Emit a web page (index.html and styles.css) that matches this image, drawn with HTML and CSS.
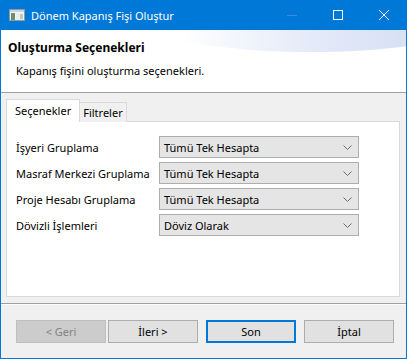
FILE: index.html
```html
<!DOCTYPE html>
<html lang="tr">
<head>
<meta charset="utf-8">
<link rel="stylesheet" href="styles.css">
</head>
<body>
<div class="window">
  <div class="titlebar">
    <svg class="app-icon" width="16" height="12" viewBox="0 0 16 12">
      <rect x="0.5" y="0.5" width="15" height="11" fill="#f4f4f4" stroke="#8a9aa8"/>
      <rect x="1" y="1" width="14" height="2" fill="#c8d4dc"/>
      <rect x="2" y="4" width="4" height="7" fill="#6f8f6a"/>
      <rect x="7" y="4" width="7" height="7" fill="#e8eef2"/>
      <rect x="11" y="5" width="3" height="5" fill="#b9cfa8"/>
    </svg>
    <span class="title">Dönem Kapanış Fişi Oluştur</span>
    <div class="controls">
      <span class="ctl min"><svg width="10" height="10" viewBox="0 0 10 10"><path d="M0 5.5h10" stroke="#3b8ddb" stroke-width="1"/></svg></span>
      <span class="ctl"><svg width="10" height="10" viewBox="0 0 10 10"><rect x="0.5" y="0.5" width="9" height="9" fill="none" stroke="#fff" stroke-width="1"/></svg></span>
      <span class="ctl"><svg width="10" height="10" viewBox="0 0 10 10"><path d="M0 0L10 10M10 0L0 10" stroke="#fff" stroke-width="1"/></svg></span>
    </div>
  </div>
  <div class="header">
    <div class="swoosh"></div>
    <div class="h-title">Oluşturma Seçenekleri</div>
    <div class="h-sub">Kapanış fişini oluşturma seçenekleri.</div>
  </div>
  <div class="body">
    <div class="tabs">
      <div class="tab active">Seçenekler</div>
      <div class="tab">Filtreler</div>
    </div>
    <div class="panel">
      <div class="row">
        <span class="label">İşyeri Gruplama</span>
        <div class="combo"><span>Tümü Tek Hesapta</span><svg class="chev" width="9" height="5" viewBox="0 0 9 5"><path d="M0.5 0.5L4.5 4.5L8.5 0.5" fill="none" stroke="#6d6d6d" stroke-width="1"/></svg></div>
      </div>
      <div class="row">
        <span class="label">Masraf Merkezi Gruplama</span>
        <div class="combo"><span>Tümü Tek Hesapta</span><svg class="chev" width="9" height="5" viewBox="0 0 9 5"><path d="M0.5 0.5L4.5 4.5L8.5 0.5" fill="none" stroke="#6d6d6d" stroke-width="1"/></svg></div>
      </div>
      <div class="row">
        <span class="label">Proje Hesabı Gruplama</span>
        <div class="combo"><span>Tümü Tek Hesapta</span><svg class="chev" width="9" height="5" viewBox="0 0 9 5"><path d="M0.5 0.5L4.5 4.5L8.5 0.5" fill="none" stroke="#6d6d6d" stroke-width="1"/></svg></div>
      </div>
      <div class="row">
        <span class="label">Dövizli İşlemleri</span>
        <div class="combo"><span>Döviz Olarak</span><svg class="chev" width="9" height="5" viewBox="0 0 9 5"><path d="M0.5 0.5L4.5 4.5L8.5 0.5" fill="none" stroke="#6d6d6d" stroke-width="1"/></svg></div>
      </div>
    </div>
  </div>
  <div class="footer">
    <div class="buttons">
      <button class="btn disabled">&lt; Geri</button>
      <button class="btn next">İleri &gt;</button>
      <button class="btn default">Son</button>
      <button class="btn">İptal</button>
    </div>
  </div>
</div>
</body>
</html>
```
FILE: styles.css
```css
* { box-sizing: border-box; }
html, body { margin: 0; padding: 0; }
body {
  width: 407px;
  height: 359px;
  font-family: "Noto Sans", "Open Sans", sans-serif;
  font-size: 11px;
  color: #000;
  background: #fff;
}
.window {
  width: 407px;
  height: 359px;
  border: 1px solid #0078d7;
  border-top: none;
  background: #f0f0f0;
  display: flex;
  flex-direction: column;
  overflow: hidden;
}
.titlebar {
  height: 30px;
  margin: 0 -1px;
  background: #0078d7;
  display: flex;
  align-items: center;
  color: #fff;
}
.app-icon { margin-left: 9px; margin-top: 0px; }
.title { margin-left: 6px; font-size: 11px; line-height: 1; }
.controls { margin-left: auto; display: flex; height: 100%; }
.ctl {
  width: 46px;
  height: 100%;
  display: flex;
  align-items: center;
  justify-content: center;
}
.ctl svg { display: block; }
.header {
  position: relative;
  height: 63px;
  background: #fff;
  border-bottom: 1px solid #a0a0a0;
  overflow: hidden;
}
.swoosh {
  position: absolute;
  right: -70px;
  top: -40px;
  width: 330px;
  height: 62px;
  border-radius: 50%;
  background: linear-gradient(90deg, rgba(255,255,255,0) 10%, #e4eaf8 50%, #cfd9f2 100%);
}
.h-title {
  position: relative;
  font-weight: bold;
  font-size: 12px;
  margin: 10px 0 0 7px;
  line-height: 16px;
}
.h-sub {
  position: relative;
  margin: 7px 0 0 15px;
  line-height: 16px;
}
.body {
  padding: 6px 6px 0 5px;
  display: flex;
  flex-direction: column;
}
.tabs {
  display: flex;
  align-items: flex-end;
  height: 23px;
  margin-bottom: -1px;
  position: relative;
  z-index: 1;
}
.tab {
  height: 20px;
  padding: 0 4px;
  border: 1px solid #d9d9d9;
  border-bottom: none;
  background: #f0f0f0;
  line-height: 19px;
  margin-left: -1px;
}
.tab.active {
  height: 23px;
  background: #fff;
  padding: 0 8px 0 8px;
  margin-left: 0;
  line-height: 21px;
  position: relative;
  z-index: 2;
  border-right: 1px solid #d9d9d9;
}
.tab.active + .tab { margin-left: -1px; padding: 0 3px 0 3px; }
.panel {
  height: 176px;
  background: #fff;
  border: 1px solid #d9d9d9;
  padding: 14px 8px 0 9px;
  display: flex;
  flex-direction: column;
  gap: 4px;
}
.row {
  display: flex;
  align-items: center;
  height: 22px;
}
.label { width: 143px; flex: none; white-space: nowrap; }
.combo {
  width: 200px;
  height: 22px;
  border: 1px solid #adadad;
  background: #e5e5e5;
  display: flex;
  align-items: center;
  padding: 0 6px 0 4px;
  white-space: nowrap;
}
.combo .chev { margin-left: auto; }
.footer {
  margin-top: 6px;
  border-top: 1px solid #a0a0a0;
  box-shadow: inset 0 1px 0 #fcfcfc;
  flex: 1;
  padding: 16px 0 0 15px;
}
.buttons { display: flex; }
.btn {
  width: 90px;
  height: 23px;
  font: inherit;
  font-size: 11px;
  border: 1px solid #adadad;
  background: #e1e1e1;
  color: #000;
  padding: 0;
  margin-right: 8px;
}
.btn.disabled {
  background: #cccccc;
  border-color: #bfbfbf;
  color: #838383;
  margin-right: 2px;
}
.btn.default { border: 2px solid #0078d7; }
```
